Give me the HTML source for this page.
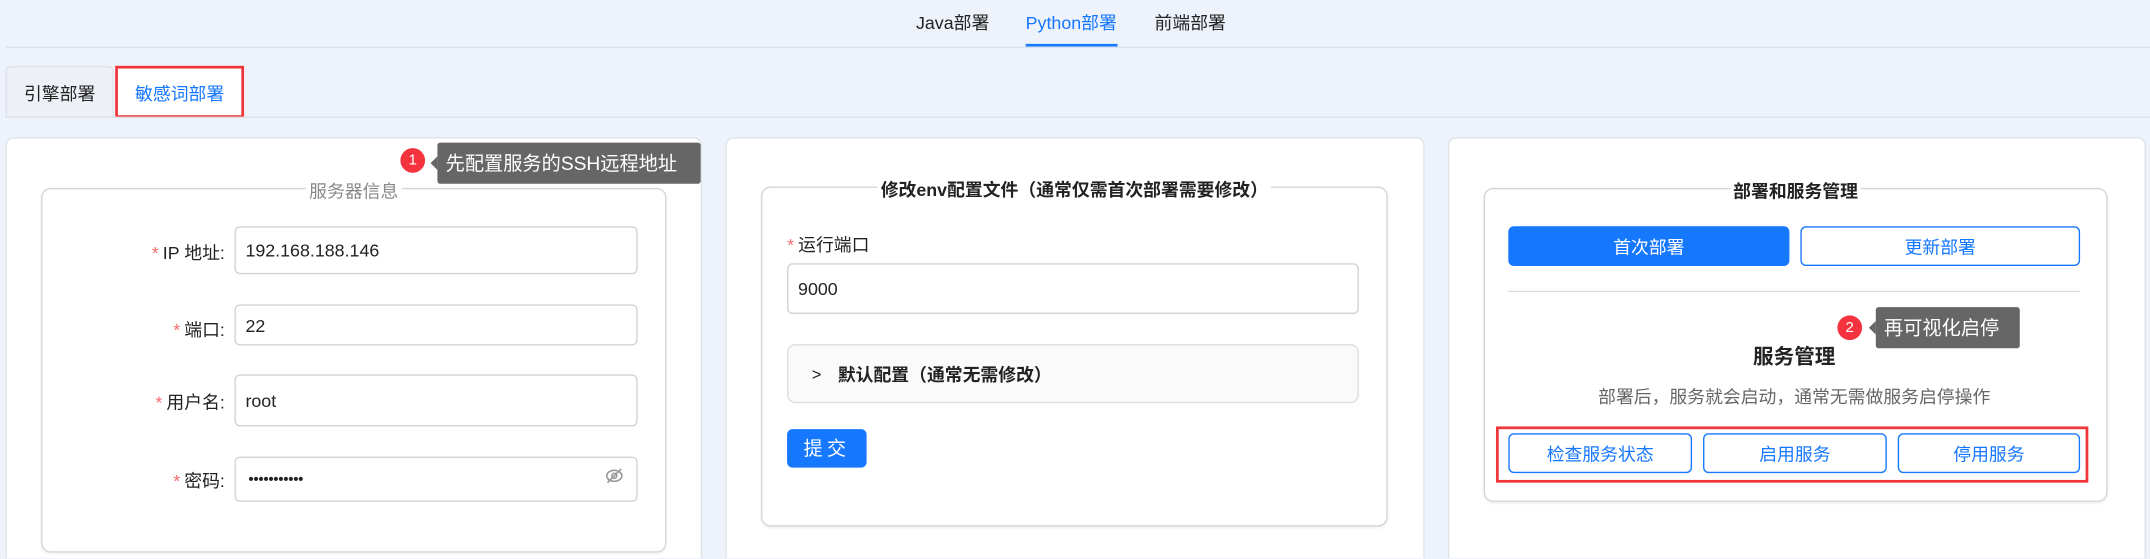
<!DOCTYPE html>
<html><head><meta charset="utf-8"><style>
html,body{margin:0;padding:0;width:2150px;height:559px;overflow:hidden;background:#eef2fb;}
#w{position:absolute;left:0;top:0;width:1568px;height:407px;overflow:hidden;transform:scale(1.3712);transform-origin:0 0;font-family:"Liberation Sans","Noto Sans CJK SC",sans-serif;color:#222;font-size:13px;}
.a{position:absolute;}
.card{position:absolute;background:#fff;border:1px solid #dde1e8;border-bottom:0;border-radius:6px 6px 0 0;top:100px;height:307px;}
.fs{position:absolute;border:1px solid #d6d6d6;border-radius:7px;box-shadow:0 1px 2px rgba(0,0,0,.07);}
.lg{position:absolute;top:-9px;left:0;right:0;text-align:center;font-size:13px;}
.lg span{background:#fff;padding:0 2px;}
.inp{position:absolute;border:1px solid #d3d3d3;border-radius:4px;background:#fff;box-sizing:border-box;padding-left:7px;font-size:13px;display:flex;align-items:center;color:#222;}
.lbl{position:absolute;text-align:right;width:100px;font-size:13px;}
.st{color:#f56c6c;margin-right:3px;}
.btn{position:absolute;box-sizing:border-box;border:1px solid #1677ff;border-radius:4px;color:#1677ff;display:flex;align-items:center;justify-content:center;font-size:13px;background:#fff;}
.tip{position:absolute;background:#666;color:#fff;font-size:14px;border-radius:2px;display:flex;align-items:center;padding-left:6px;box-sizing:border-box;}
.tip:before{content:"";position:absolute;left:-5px;top:50%;margin-top:-5px;border:5px solid transparent;border-left:0;border-right-color:#666;}
.dot{position:absolute;width:18px;height:18px;border-radius:50%;background:#f5333f;color:#fff;font-size:11px;text-align:center;line-height:18px;}
</style></head><body><div id="w">
<div class="a" style="left:668px;top:6px;font-size:13px;">Java部署</div>
<div class="a" style="left:748px;top:6px;font-size:13px;color:#1677ff;">Python部署</div>
<div class="a" style="left:842px;top:6px;font-size:13px;">前端部署</div>
<div class="a" style="left:748px;top:32px;width:67px;height:2px;background:#1677ff;"></div>
<div class="a" style="left:4px;top:34px;width:1564px;height:1px;background:#dde2ea;"></div>

<div class="a" style="left:4px;top:48px;width:79px;height:37px;background:#edf0f6;border:1px solid #dde1e8;border-bottom:0;border-radius:4px 4px 0 0;box-sizing:border-box;display:flex;align-items:center;justify-content:center;font-size:13px;">引擎部署</div>
<div class="a" style="left:84px;top:48px;width:94px;height:38px;background:#fff;box-sizing:border-box;border:2px solid #f0353b;display:flex;align-items:center;justify-content:center;font-size:13px;color:#1677ff;">敏感词部署</div>
<div class="a" style="left:4px;top:85px;width:1564px;height:1px;background:#dde1e8;"></div>

<div class="card" style="left:4px;width:506px;"></div>
<div class="card" style="left:529px;width:508px;"></div>
<div class="card" style="left:1056px;width:507px;"></div>

<!-- card1 -->
<div class="fs" style="left:30px;top:137px;width:454px;height:264px;"><div class="lg" style="color:#888;"><span>服务器信息</span></div></div>
<div class="dot" style="left:292px;top:108px;">1</div>
<div class="tip" style="left:319px;top:104px;width:192px;height:30px;">先配置服务的SSH远程地址</div>
<div class="lbl" style="left:64px;top:174px;"><span class="st">*</span>IP 地址:</div>
<div class="inp" style="left:171px;top:165px;width:294px;height:35px;">192.168.188.146</div>
<div class="lbl" style="left:64px;top:230px;"><span class="st">*</span>端口:</div>
<div class="inp" style="left:171px;top:222px;width:294px;height:30px;">22</div>
<div class="lbl" style="left:64px;top:283px;"><span class="st">*</span>用户名:</div>
<div class="inp" style="left:171px;top:273px;width:294px;height:38px;">root</div>
<div class="lbl" style="left:64px;top:340px;"><span class="st">*</span>密码:</div>
<div class="inp" style="left:171px;top:333px;width:294px;height:33px;font-size:7px;letter-spacing:-0.6px;padding-left:9px;">●●●●●●●●●●●</div>
<svg class="a" style="left:441px;top:340px;" width="14" height="14" viewBox="0 0 14 14" fill="none" stroke="#999" stroke-width="1.2"><ellipse cx="7" cy="7" rx="5.5" ry="4"/><circle cx="7" cy="7" r="1.8"/><path d="M2 12L12 2"/></svg>

<!-- card2 -->
<div class="fs" style="left:555px;top:136px;width:455px;height:246px;"><div class="lg" style="font-weight:bold;"><span>修改env配置文件（通常仅需首次部署需要修改）</span></div></div>
<div class="a" style="left:574px;top:168px;font-size:13px;"><span class="st">*</span>运行端口</div>
<div class="inp" style="left:574px;top:192px;width:417px;height:37px;">9000</div>
<div class="a" style="left:574px;top:251px;width:417px;height:43px;box-sizing:border-box;border:1px solid #ddd;border-radius:6px;background:#fafafa;display:flex;align-items:center;font-weight:bold;font-size:13px;"><span style="margin:0 12px 0 17px;font-weight:normal;font-size:12px;">&gt;</span>默认配置（通常无需修改）</div>
<div class="a" style="left:574px;top:313px;width:58px;height:28px;background:#1677ff;border-radius:4px;color:#fff;display:flex;align-items:center;justify-content:center;font-size:14px;letter-spacing:3px;">提交</div>

<!-- card3 -->
<div class="fs" style="left:1082px;top:137px;width:453px;height:227px;"><div class="lg" style="font-weight:bold;"><span>部署和服务管理</span></div></div>
<div class="btn" style="left:1100px;top:165px;width:205px;height:29px;background:#1677ff;color:#fff;">首次部署</div>
<div class="btn" style="left:1313px;top:165px;width:204px;height:29px;">更新部署</div>
<div class="a" style="left:1100px;top:212px;width:417px;height:1px;background:#ddd;"></div>
<div class="dot" style="left:1340px;top:230px;">2</div>
<div class="tip" style="left:1368px;top:224px;width:105px;height:30px;">再可视化启停</div>
<div class="a" style="left:1082px;top:249px;width:453px;text-align:center;font-weight:bold;font-size:15px;">服务管理</div>
<div class="a" style="left:1082px;top:279px;width:453px;text-align:center;color:#666;font-size:13px;">部署后，服务就会启动，通常无需做服务启停操作</div>
<div class="a" style="left:1091px;top:311px;width:432px;height:41px;box-sizing:border-box;border:2px solid #f0353b;"></div>
<div class="btn" style="left:1100px;top:316px;width:134px;height:29px;">检查服务状态</div>
<div class="btn" style="left:1242px;top:316px;width:134px;height:29px;">启用服务</div>
<div class="btn" style="left:1384px;top:316px;width:133px;height:29px;">停用服务</div>
</div></body></html>
